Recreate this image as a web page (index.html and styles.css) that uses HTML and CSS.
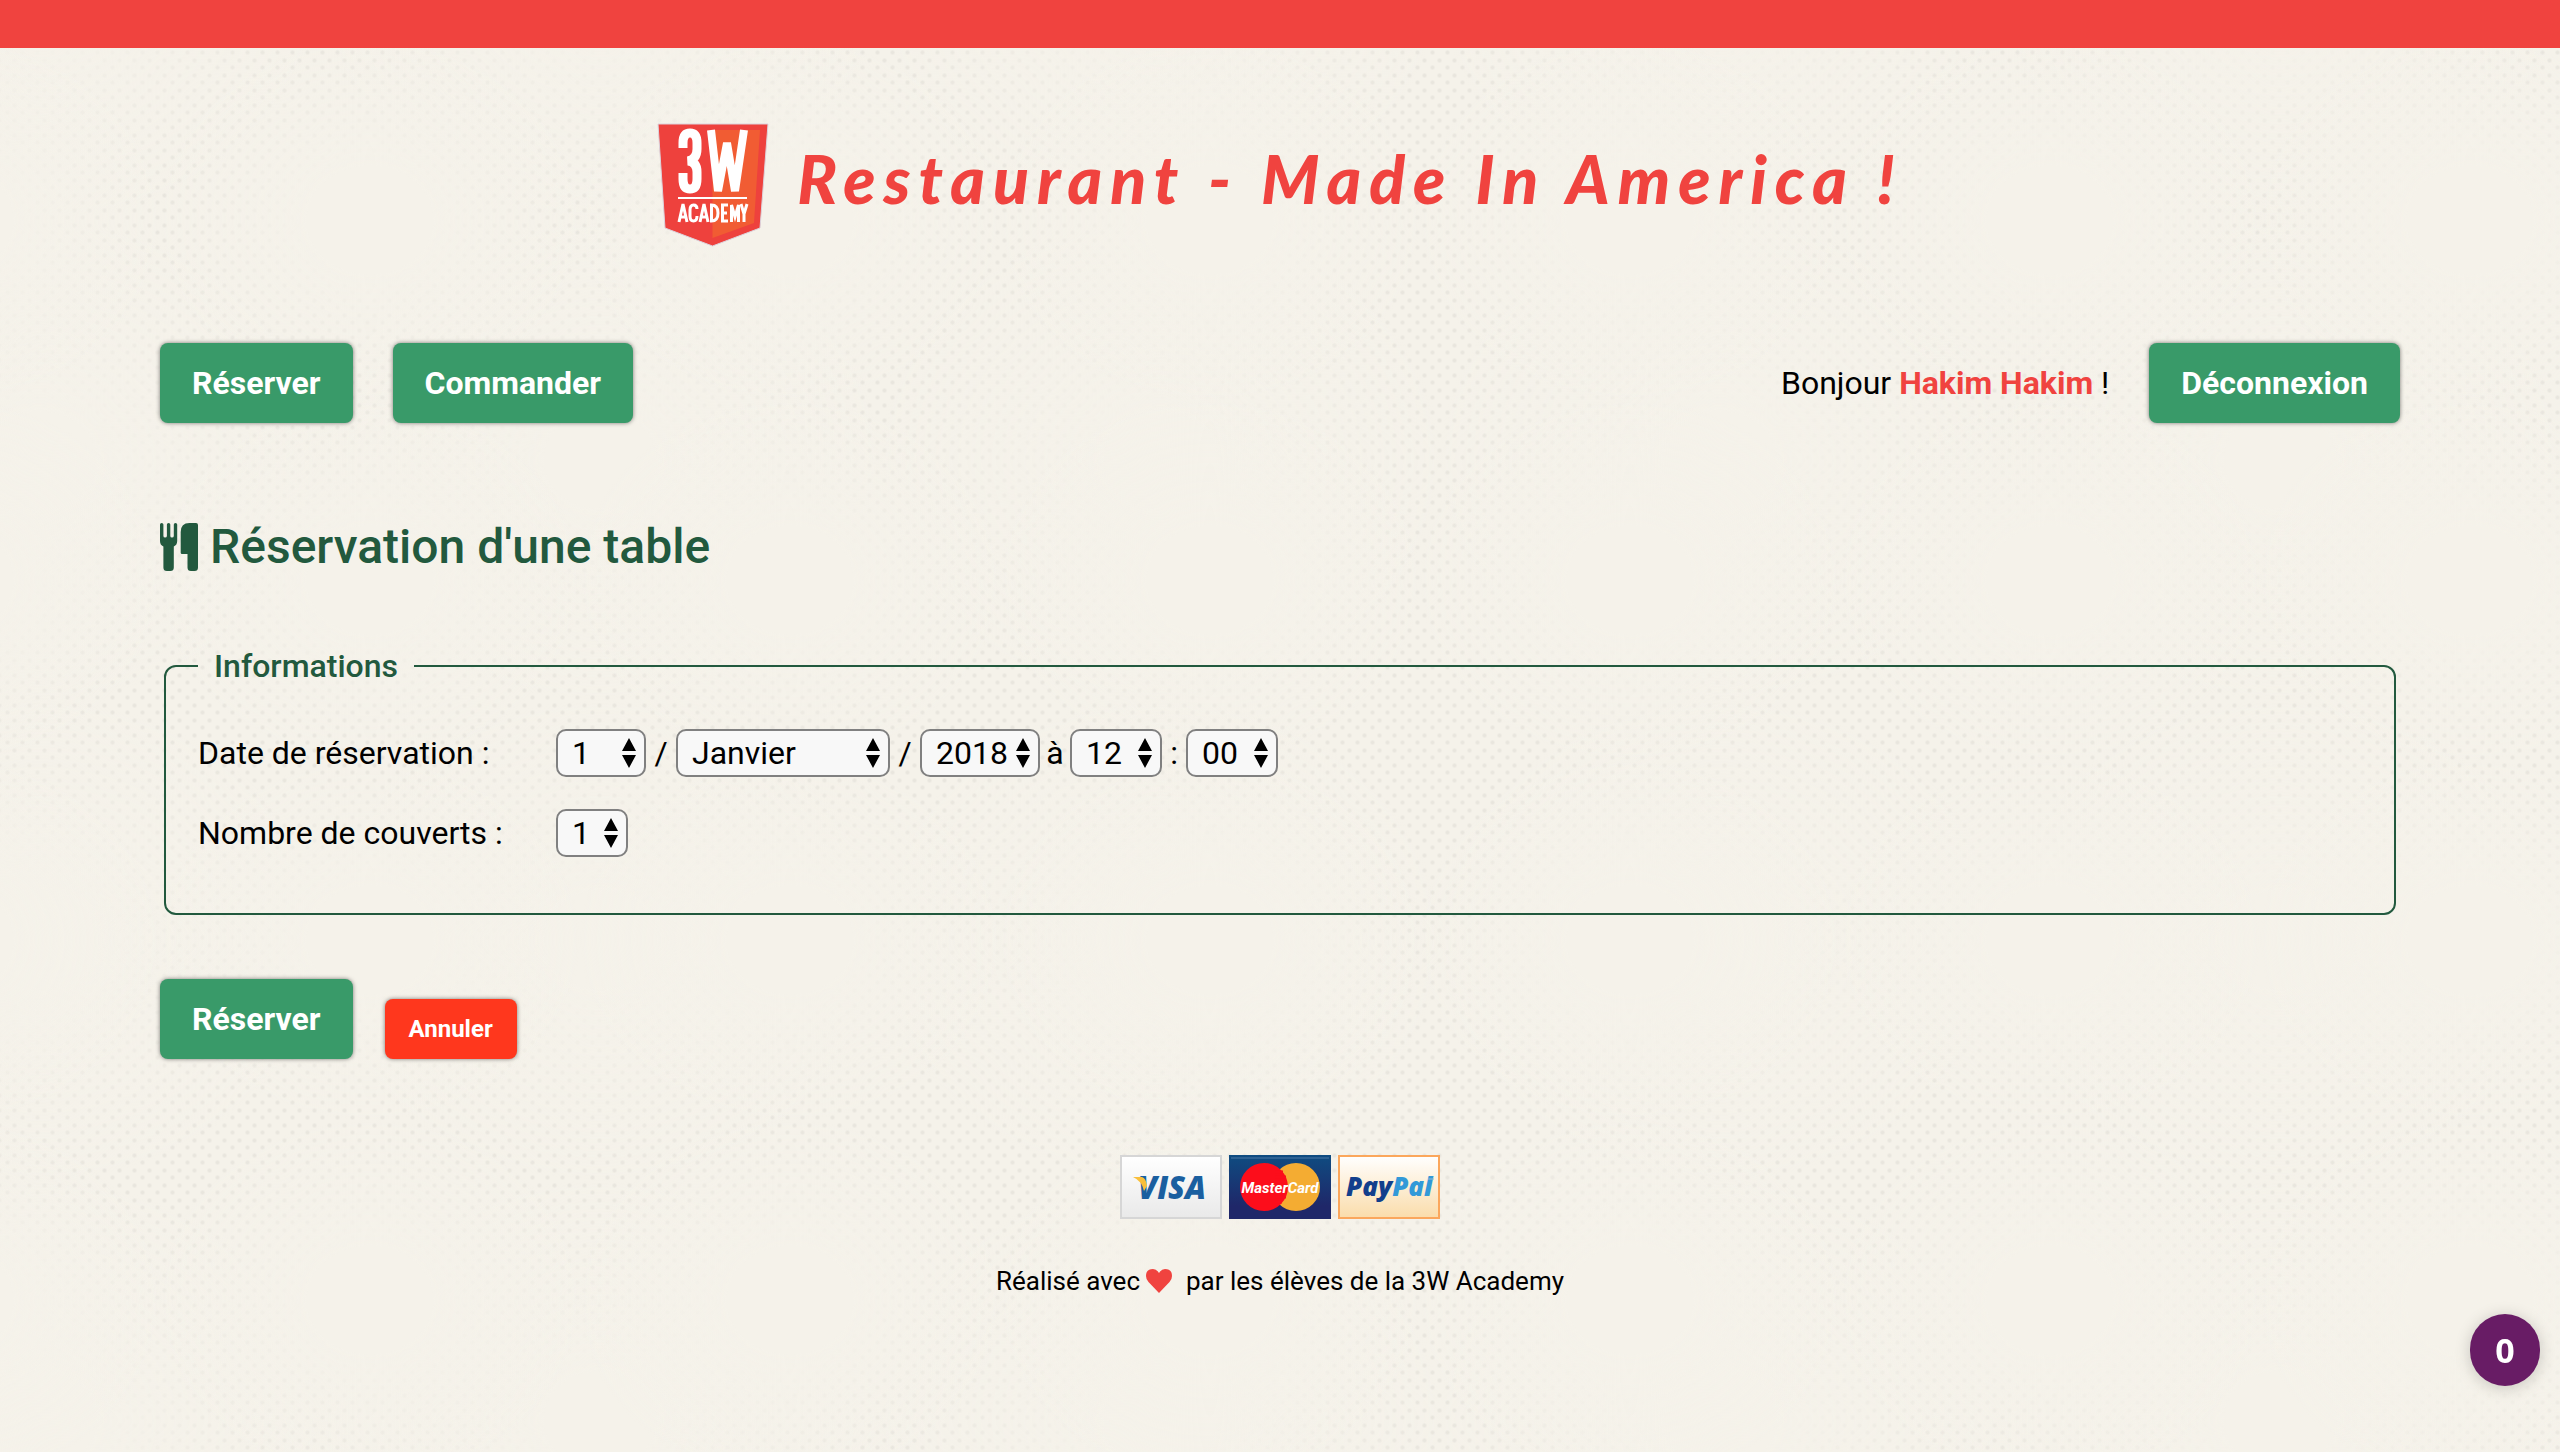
FILE: index.html
```html
<!DOCTYPE html>
<html lang="fr">
<head>
<meta charset="utf-8">
<meta name="viewport" content="width=device-width, initial-scale=1">
<title>Restaurant - Made In America !</title>
<link rel="stylesheet" href="styles.css">
</head>
<body>
<header class="site-header">
  <svg class="logo" viewBox="0 0 112 124" role="img" aria-label="3W Academy">
    <path d="M1 1H111L103 105L55.500 123L8 105Z" fill="#ee413d" stroke="#dcd3dc" stroke-width="1"/>
    <path d="M55.500 7H103L97 100L55.500 115Z" fill="#f15c33"/>
    <g fill="none" stroke="#fff">
      <path d="M26 25V20Q26 10 33 10T40 20V26Q40 36 31 38Q40 39 40 49V56Q40 66 33 66T26 56V50" stroke-width="9"/>
      <path d="M54 7L61 68L70 20L78 68L87 7" stroke-width="8" stroke-linejoin="bevel"/>
      <path d="M21 75H90" stroke-width="2"/>
    </g>
    <g fill="none" stroke="#fff" stroke-width="3">
      <path d="M22 99L26 81L30 99M23 94H29"/>
      <path d="M40 86Q40 82 36.500 82T33 87V93Q33 98 36.500 98T40 93"/>
      <path d="M43 99L47 81L51 99M44 94H50"/>
      <path d="M54.500 82V98Q61 98 61 90T54.500 82Z"/>
      <path d="M71 82H65.500V98H71M66 90H70"/>
      <path d="M74.500 99V82L78 94L81.500 82V99"/>
      <path d="M84 81L87 91L90 81M87 90V99"/>
    </g>
  </svg>
  <h1 class="site-title">Restaurant - Made In America !</h1>
</header>

<nav class="main-nav">
  <a class="button" href="#reserver">Réserver</a>
  <a class="button" href="#commander">Commander</a>
  <p class="greeting">Bonjour <strong>Hakim Hakim</strong> !</p>
  <a class="button" href="#deconnexion">Déconnexion</a>
</nav>

<main class="content">
  <h2 class="page-title">
    <svg class="page-icon" viewBox="0 0 38 48" fill="currentColor" aria-hidden="true">
      <path d="M0 1.500Q0 0 1.700 0T3.400 1.500V13Q3.400 14.500 5.100 14.500T6.900 13V1.500Q6.900 0 8.600 0T10.300 1.500V13Q10.300 14.500 12 14.500T13.800 13V1.500Q13.800 0 15.500 0T17.200 1.500V18Q17.200 22 13.800 23.500V44.500Q13.800 48 10.300 48H6.900Q3.400 48 3.400 44.500V23.500Q0 22 0 18Z"/>
      <path d="M38 2V44.500Q38 48 34.500 48H31Q27.500 48 27.500 44.500V31H22Q20.700 31 20.700 29.700V9Q20.700 0 29.500 0H36Q38 0 38 2Z"/>
    </svg>
    Réservation d'une table
  </h2>

  <form id="reserver">
    <fieldset class="panel">
      <legend>Informations</legend>
      <div class="field">
        <label for="day">Date de réservation :</label>
        <div class="controls">
          <select id="day" class="w-day"><option>1</option><option>2</option></select>
          <span class="sep">/</span>
          <select class="w-month" aria-label="Mois"><option>Janvier</option><option>Février</option></select>
          <span class="sep">/</span>
          <select class="w-year" aria-label="Année"><option>2018</option><option>2019</option></select>
          <span class="sep">à</span>
          <select class="w-time" aria-label="Heure"><option>12</option><option>13</option></select>
          <span class="sep sep-time">:</span>
          <select class="w-time" aria-label="Minutes"><option>00</option><option>30</option></select>
        </div>
      </div>
      <div class="field">
        <label for="seats">Nombre de couverts :</label>
        <div class="controls">
          <select id="seats" class="w-seats"><option>1</option><option>2</option></select>
        </div>
      </div>
    </fieldset>
    <div class="actions">
      <button class="button" type="submit">Réserver</button>
      <button class="button button-cancel" type="reset">Annuler</button>
    </div>
  </form>
</main>

<footer class="site-footer">
  <div class="cards">
    <svg class="card" viewBox="0 0 102 64" role="img" aria-label="Visa">
      <defs><linearGradient id="gv" x2="0" y2="1"><stop stop-color="#fff"/><stop offset="1" stop-color="#e9e9e9"/></linearGradient></defs>
      <rect x="1" y="1" width="100" height="62" fill="url(#gv)" stroke="#d6d6d6" stroke-width="2"/>
      <text x="18" y="44" class="visa">VISA</text>
      <path d="M13 22H22Q26 23 27 31L24 36Q22 26 13 22Z" fill="#f9bf3b"/>
    </svg>
    <svg class="card" viewBox="0 0 102 64" role="img" aria-label="MasterCard">
      <defs><linearGradient id="gm" x2="0" y2="1"><stop stop-color="#0f4c81"/><stop offset=".8" stop-color="#1f2769"/></linearGradient></defs>
      <rect width="102" height="64" fill="url(#gm)"/>
      <path d="M2 3H100" stroke="#2d6193" stroke-width="2"/>
      <circle cx="67" cy="32" r="24" fill="#f4ac32"/>
      <circle cx="35" cy="32" r="24" fill="#fc0d1b"/>
      <path d="M46 17H54M46 22H57M46 27H58M46 37H58M46 42H57M46 47H53" stroke="#fc0d1b" stroke-width="3"/>
      <text x="51" y="38" class="mastercard">MasterCard</text>
    </svg>
    <svg class="card" viewBox="0 0 102 64" role="img" aria-label="PayPal">
      <defs><linearGradient id="gp" x2="0" y2="1"><stop stop-color="#fff"/><stop offset="1" stop-color="#fadcaa"/></linearGradient></defs>
      <rect x="1" y="1" width="100" height="62" fill="url(#gp)" stroke="#fba75c" stroke-width="2"/>
      <text x="8" y="41" class="paypal">Pay<tspan class="pal">Pal</tspan></text>
      <path d="M90 24H96" stroke="#9fb8cc" stroke-width="1"/>
    </svg>
  </div>
  <p class="credit">Réalisé avec
    <svg class="heart" viewBox="0 0 26 24" role="img" aria-label="amour"><path d="M13 24L2.500 13Q0 10.500 0 7Q0 0 7 0Q10.500 0 13 4Q15.500 0 19 0Q26 0 26 7Q26 10.500 23.500 13Z" fill="#f0433f"/></svg>
    <span>par les élèves de la 3W Academy</span></p>
</footer>

<button class="counter" type="button">0</button>
</body>
</html>
```
FILE: styles.css
```css
* { box-sizing: border-box; }

body {
  margin: 0;
  min-height: 100vh;
  border-top: 48px solid #f0433f;
  color: #000;
  font: 32px/38px Roboto, "Liberation Sans", sans-serif;
  background-color: #f5f2ea;
  /* halftone dots, faded out in large soft patches */
  background-image:
    radial-gradient(closest-side, #f5f2ea 30%, #f5f2ea00),
    radial-gradient(closest-side, #f5f2ea 20%, #f5f2ea00),
    radial-gradient(circle, #e9e6de 1px, #e9e6de00 3px),
    radial-gradient(circle, #e9e6de 1px, #e9e6de00 3px);
  background-size: 420px 360px, 560px 480px, 15px 15px, 15px 15px;
  background-position: 160px 40px, 320px 220px, 0 0, 7px 8px;
}

h1, h2, p { margin: 0; }

.site-header {
  display: flex;
  justify-content: center;
  align-items: center;
  gap: 28px;
  padding: 75px 0 0;
}

.logo { width: 112px; height: 124px; }

.site-title {
  color: #f0433f;
  font: italic 900 66px/80px Lato, sans-serif;
  letter-spacing: 8px;
  padding-bottom: 12px;
}

.main-nav {
  display: flex;
  align-items: center;
  gap: 40px;
  padding: 96px 160px 0;
}

.greeting { margin-left: auto; }
.greeting strong { color: #f0433f; }

.button {
  padding: 21px 32px;
  border: 0;
  border-radius: 8px;
  background: #399a69;
  box-shadow: 0 0 4px #00000080;
  color: #fff;
  font: bold 32px/38px Roboto, "Liberation Sans", sans-serif;
  text-decoration: none;
}

.button-cancel {
  padding: 16px 24px;
  background: #ff371d;
  font-size: 24px;
  line-height: 28px;
}

.content { padding: 96px 160px 0; }

.page-title {
  display: flex;
  align-items: center;
  gap: 12px;
  color: #22593e;
  font-size: 48px;
  font-weight: 500;
  line-height: 56px;
}

.page-icon { width: 38px; height: 48px; }

.panel {
  margin: 72px 4px 0;
  padding: 44px 32px 56px;
  border: 2px solid #22593e;
  border-radius: 12px;
  min-width: 0;
}

.panel legend {
  padding: 0 16px;
  color: #22593e;
  font-weight: 500;
}

.field { display: flex; align-items: center; }
.field + .field { margin-top: 32px; }
.field label { width: 358px; }

.controls { display: flex; align-items: center; }
.sep { width: 30px; text-align: center; }
.sep-time { width: 24px; }

select {
  height: 48px;
  margin: 0;
  padding: 0 0 0 14px;
  border: 2px solid #808080;
  border-radius: 10px;
  color: #000;
  font: inherit;
  appearance: none;
  background: #f8f8f8 url("data:image/svg+xml,%3Csvg xmlns='http://www.w3.org/2000/svg' width='14' height='30'%3E%3Cpath d='M7 0L14 13H0ZM7 30L14 17H0Z'/%3E%3C/svg%3E") no-repeat right 8px center;
}

.w-day { width: 90px; }
.w-month { width: 214px; }
.w-year { width: 120px; }
.w-time { width: 92px; }
.w-seats { width: 72px; }

.actions {
  display: flex;
  align-items: flex-end;
  gap: 32px;
  margin-top: 64px;
}

.site-footer {
  display: flex;
  flex-direction: column;
  align-items: center;
  padding: 96px 0 64px;
}

.cards { display: flex; gap: 7px; }
.card { width: 102px; height: 64px; }

.visa { fill: #1a5fa0; font: italic 800 31px "Open Sans", sans-serif; }
.mastercard { fill: #fff; font: italic bold 15px Roboto, sans-serif; text-anchor: middle; }
.paypal { fill: #123f8c; font: italic 800 26px "Open Sans", sans-serif; }
.pal { fill: #3299d8; }

.credit {
  display: flex;
  align-items: center;
  gap: 6px;
  margin-top: 46px;
  font-size: 26px;
  line-height: 32px;
}

.credit span { margin-left: 8px; }
.heart { width: 26px; height: 24px; }

.counter {
  position: fixed;
  right: 20px;
  bottom: 66px;
  width: 70px;
  height: 72px;
  padding: 0;
  border: 0;
  border-radius: 36px;
  background: #681c65;
  box-shadow: 0 2px 16px #00000030;
  color: #fff;
  font: bold 34px/70px "Noto Sans", sans-serif;
  text-align: center;
}
```
